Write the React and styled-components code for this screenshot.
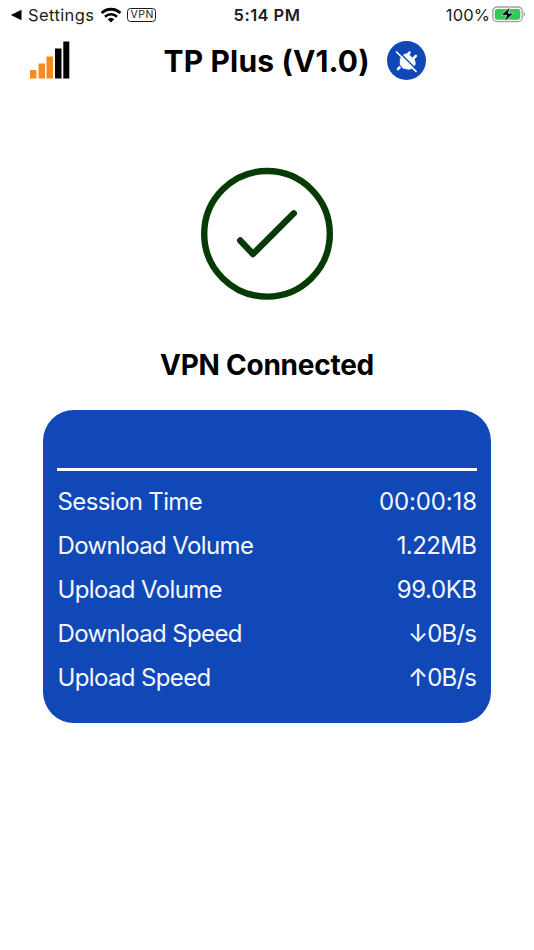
import React from 'react';
import styled, { createGlobalStyle } from 'styled-components';

const GlobalStyle = createGlobalStyle`
  body {
    margin: 0;
    background-color: #fff;
    color: #000;
    font-family: Inter, 'Liberation Sans', sans-serif;
  }
`;

const Screen = styled.div`
  display: flex;
  flex-flow: column nowrap;
  min-height: 950px;
  box-sizing: border-box;
  overflow: hidden;
`;

const StatusBar = styled.div`
  display: grid;
  grid-template-columns: 1fr auto 1fr;
  align-items: center;
  height: 30px;
  padding: 0 8px 0 10px;
  font-size: 16.5px;
  line-height: 30px;
`;

const StatusGroup = styled.div`
  display: flex;
  align-items: center;
  justify-content: ${props => (props.$end ? 'flex-end' : 'flex-start')};
  color: #1c1c1c;
`;

const StatusText = styled.span`
  letter-spacing: ${props => props.$spacing || '0'};
`;

const Clock = styled.div`
  margin-right: 2px;
  font-weight: 600;
  letter-spacing: 0.45px;
  color: #1c1c1c;
`;

const BackArrow = styled.svg`
  width: 12px;
  height: 12px;
  margin-right: 6px;
`;

const Wifi = styled.svg`
  width: 22px;
  height: 16px;
  margin: 0 5px 0 6px;
`;

const VpnTag = styled.div`
  box-sizing: border-box;
  width: 29px;
  height: 14px;
  border: 1px solid #1c1c1c;
  border-radius: 3.5px;
  font-size: 10.5px;
  line-height: 12px;
  letter-spacing: 0.5px;
  text-indent: 0.5px;
  text-align: center;
`;

const Battery = styled.svg`
  width: 34px;
  height: 18px;
  margin-left: 2px;
`;

const Header = styled.header`
  display: flex;
  align-items: center;
  height: 60px;
  padding-left: 30px;
`;

const Signal = styled.svg`
  width: 40px;
  height: 38px;
`;

const Title = styled.h1`
  margin: 1px 0 0 93.5px;
  width: 223.5px;
  font-size: 30px;
  font-weight: 700;
  line-height: 36px;
  letter-spacing: 0.15px;
  white-space: nowrap;
`;

const DisconnectButton = styled.button`
  width: 39px;
  height: 39px;
  padding: 0;
  border: 0;
  border-radius: 50%;
  background-color: #1048b8;
`;

const PlugIcon = styled.svg`
  display: block;
  width: 39px;
  height: 39px;
`;

const Connection = styled.section`
  display: flex;
  flex-flow: column nowrap;
  align-items: center;
  padding-top: 77px;
`;

const CheckCircle = styled.svg`
  width: 134px;
  height: 134px;
`;

const ConnectionLabel = styled.h2`
  margin: 46px 0 0;
  font-size: 28px;
  font-weight: 650;
  line-height: 36px;
  letter-spacing: -0.25px;
`;

const StatsCard = styled.section`
  box-sizing: border-box;
  height: 313px;
  margin: 27px 43px 0;
  padding: 58px 14px 0;
  border-radius: 31px;
  background-color: #1048b8;
  color: #f6f7fc;
`;

const Divider = styled.div`
  height: 3px;
  margin-bottom: 8.5px;
  background-color: #fff;
`;

const StatRow = styled.div`
  display: flex;
  justify-content: space-between;
  height: 44px;
  font-size: 24px;
  line-height: 44px;
`;

const StatLabel = styled.span`
  margin-left: 0.5px;
  letter-spacing: -0.63px;
`;

const StatValue = styled.span`
  letter-spacing: ${props => props.$spacing}px;
  margin-right: ${props => -props.$spacing}px;
`;

const stats = [
  { label: 'Session Time', value: '00:00:18', spacing: -0.15 },
  { label: 'Download Volume', value: '1.22MB', spacing: -0.6 },
  { label: 'Upload Volume', value: '99.0KB', spacing: -0.45 },
  { label: 'Download Speed', value: '↓0B/s', spacing: -0.8 },
  { label: 'Upload Speed', value: '↑0B/s', spacing: -0.8 },
];

const App = () => (
  <Screen>
    <GlobalStyle />
    <StatusBar>
      <StatusGroup>
        <BackArrow viewBox="0 0 12 12">
          <path d="M11.5 0.8v10.4L0.8 6z" fill="#000" />
        </BackArrow>
        <StatusText $spacing="0.4px">Settings</StatusText>
        <Wifi viewBox="0 0 22 16" fill="none" stroke="#000">
          <path d="M1.6 6.1a13.4 13.4 0 0 1 18.8 0" strokeWidth="2.8" />
          <path d="M5 9.7a8.6 8.6 0 0 1 12 0" strokeWidth="2.6" />
          <path d="M11 15.6l-3.3-3.4a4.8 4.8 0 0 1 6.6 0z" fill="#000" stroke="none" />
        </Wifi>
        <VpnTag>VPN</VpnTag>
      </StatusGroup>
      <Clock>5:14 PM</Clock>
      <StatusGroup $end>
        <StatusText $spacing="0.1px">100%</StatusText>
        <Battery viewBox="0 0 34 18">
          <rect x="0.8" y="1" width="29.4" height="14.6" rx="4.2" fill="none" stroke="#a0a0a0" strokeWidth="1.3" />
          <rect x="2.7" y="2.9" width="25.6" height="10.8" rx="2.6" fill="#34c759" />
          <path d="M31.6 5.8c2 .8 2 4 0 4.8z" fill="#a0a0a0" />
          <path d="M18 1L9.2 9.200h5.400l-2.200 6.600L21.600 7.200h-5.400z" fill="#000" stroke="#fff" strokeWidth="0.6" />
        </Battery>
      </StatusGroup>
    </StatusBar>

    <Header>
      <Signal viewBox="0 0 40 38">
        <path d="M0 29h6.5v8.500H0zM8.5 22.500H15v15H8.500zM16.500 15.500H23v22h-6.500z" fill="#f68b1f" />
        <path d="M25 7.500h6.500v30H25zM33.300 0.500h6v37h-6z" fill="#000" />
      </Signal>
      <Title>TP Plus (V1.0)</Title>
      <DisconnectButton aria-label="Disconnect">
        <PlugIcon viewBox="0 0 39 39">
          <path
            d="M12.800 18l3.700-4.500 4-1.500 7.500 7 .7 4-3.200 4.500-3.500 1.300-6-1.300-3.200-4z"
            fill="#fff"
          />
          <path
            d="M20.500 14.500l2-3M25.500 18.500l3.400-3.600M12.500 26.500l-1.500 1.500"
            stroke="#fff"
            strokeWidth="2.600"
            strokeLinecap="round"
          />
          <path d="M11.200 10.300l19.500 19.400" stroke="#1048b8" strokeWidth="1.500" />
          <path d="M9.600 11l19.400 19.300" stroke="#fff" strokeWidth="1.700" strokeLinecap="round" />
        </PlugIcon>
      </DisconnectButton>
    </Header>

    <Connection>
      <CheckCircle viewBox="0 0 134 134" fill="none" stroke="#073b06">
        <circle cx="67" cy="66.800" r="62.800" strokeWidth="6.400" />
        <path
          d="M40.200 73.500L53 87l40.800-40.700"
          strokeWidth="6.400"
          strokeLinecap="round"
          strokeLinejoin="round"
        />
      </CheckCircle>
      <ConnectionLabel>VPN Connected</ConnectionLabel>
    </Connection>

    <StatsCard>
      <Divider />
      {stats.map(stat => (
        <StatRow key={stat.label}>
          <StatLabel>{stat.label}</StatLabel>
          <StatValue $spacing={stat.spacing}>{stat.value}</StatValue>
        </StatRow>
      ))}
    </StatsCard>
  </Screen>
);

export default App;
